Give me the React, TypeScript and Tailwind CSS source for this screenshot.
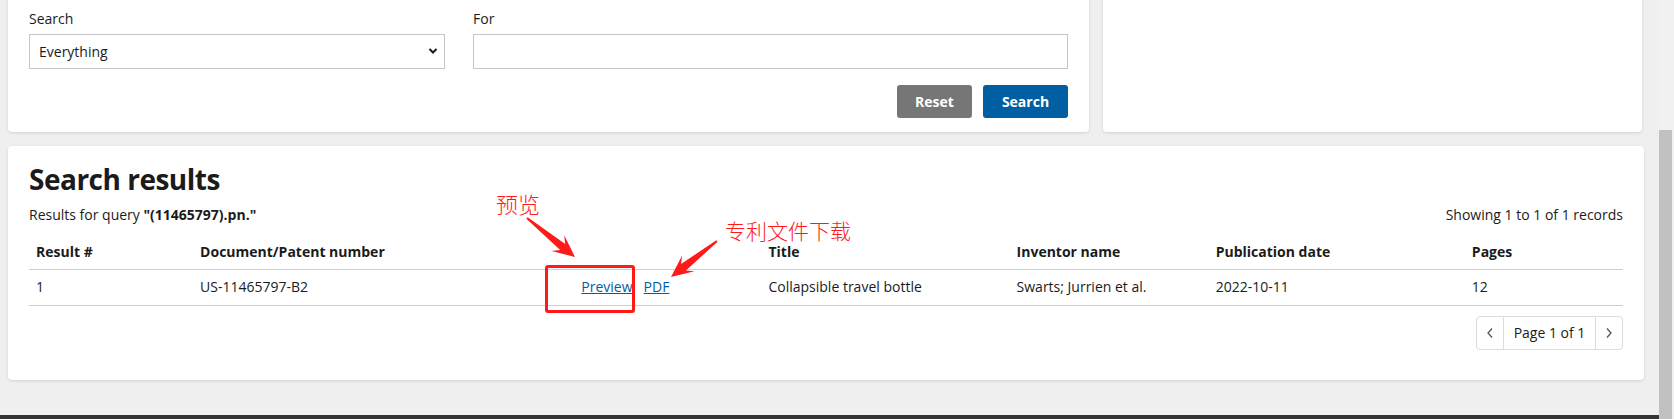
import React from "react";

const font = { fontFamily: "'Open Sans', 'Noto Sans CJK SC', sans-serif" };

function arrowPoints(tx: number, ty: number, px: number, py: number) {
  const dx = px - tx;
  const dy = py - ty;
  const len = Math.hypot(dx, dy);
  const ux = dx / len;
  const uy = dy / len;
  const nx = -uy;
  const ny = ux;
  const headL = 22;
  const headW = 10;
  const w0 = 1;
  const w1 = 4;
  const bx = px - ux * headL;
  const by = py - uy * headL;
  const sx = px - ux * headL * 0.72;
  const sy = py - uy * headL * 0.72;
  const pts = [
    [tx + nx * w0, ty + ny * w0],
    [sx + nx * w1, sy + ny * w1],
    [bx + nx * headW, by + ny * headW],
    [px, py],
    [bx - nx * headW, by - ny * headW],
    [sx - nx * w1, sy - ny * w1],
    [tx - nx * w0, ty - ny * w0],
  ];
  return pts.map((p) => p.join(",")).join(" ");
}

const columns = [
  { label: "Result #", w: "w-[164px]" },
  { label: "Document/Patent number", w: "w-[381px]" },
  { label: "", w: "w-[187px]" },
  { label: "Title", w: "w-[248px]" },
  { label: "Inventor name", w: "w-[199px]" },
  { label: "Publication date", w: "w-[256px]" },
  { label: "Pages", w: "w-[158px]" },
];

function SearchForm() {
  return (
    <div className="flex-1 bg-white rounded shadow-[0_1px_3px_rgba(0,0,0,0.12)] px-[21px] pt-[21px] pb-[14px]">
      <div className="flex gap-[28px]">
        <div className="w-[416px]">
          <label className="block text-sm leading-5 text-[#1b1b1b] mb-[5px]">Search</label>
          <div className="relative">
            <select className="appearance-none w-full h-[35px] border border-[#c6c6c6] bg-white pl-[9px] text-sm text-[#1b1b1b] outline-none">
              <option>Everything</option>
            </select>
            <svg className="absolute right-[7px] top-[13px]" width="10" height="8" viewBox="0 0 10 8">
              <path d="M1.5 2 L5 5.5 L8.5 2" fill="none" stroke="#1b1b1b" strokeWidth="2" />
            </svg>
          </div>
        </div>
        <div className="flex-1">
          <label className="block text-sm leading-5 text-[#1b1b1b] mb-[5px]">For</label>
          <input className="w-full h-[35px] border border-[#c6c6c6] bg-white px-2 text-sm outline-none" />
        </div>
      </div>
      <div className="flex justify-end gap-[11px] mt-[16px]">
        <button className="w-[75px] h-[33px] rounded-[3px] bg-[#767676] text-white text-sm font-bold">Reset</button>
        <button className="w-[85px] h-[33px] rounded-[3px] bg-[#005ea2] text-white text-sm font-bold">Search</button>
      </div>
    </div>
  );
}

function Results() {
  return (
    <div className="bg-white rounded shadow-[0_1px_3px_rgba(0,0,0,0.12)] px-[21px] pt-[16px] pb-[30px] mr-[15px]">
      <h1 className="text-[28px] leading-[34px] font-bold text-[#1b1b1b] tracking-[-0.5px]">Search results</h1>
      <div className="flex justify-between text-sm leading-5 text-[#1b1b1b] mt-[9px]">
        <p>
          Results for query <span className="font-bold">"(11465797).pn."</span>
        </p>
        <p>Showing 1 to 1 of 1 records</p>
      </div>
      <table className="table-fixed w-full mt-[10px] text-sm text-[#1b1b1b]">
        <colgroup>
          {columns.map((c, i) => (
            <col key={i} className={c.w} />
          ))}
        </colgroup>
        <thead>
          <tr className="border-b border-[#cfcfcf]">
            {columns.map((c, i) => (
              <th key={i} className="text-left font-bold px-[7px] h-[34px] leading-5">
                {c.label}
              </th>
            ))}
          </tr>
        </thead>
        <tbody>
          <tr className="border-b border-[#cfcfcf]">
            <td className="px-[7px] h-[36px]">1</td>
            <td className="px-[7px]">US-11465797-B2</td>
            <td className="px-[7px]">
              <a className="text-[#005ea2] underline">Preview</a>
              <a className="text-[#005ea2] underline ml-[11px]">PDF</a>
            </td>
            <td className="px-[7px]">Collapsible travel bottle</td>
            <td className="px-[7px]">Swarts; Jurrien et al.</td>
            <td className="px-[7px]">2022-10-11</td>
            <td className="px-[7px]">12</td>
          </tr>
        </tbody>
      </table>
      <div className="flex justify-end mt-[10px]">
        <div className="flex h-[34px] border border-[#dcdcdc] rounded text-sm text-[#1b1b1b]">
          <div className="w-[27px] flex items-center justify-center border-r border-[#dcdcdc]">
            <svg width="8" height="12" viewBox="0 0 8 12">
              <path d="M6 1.5 L2 6 L6 10.5" fill="none" stroke="#555" strokeWidth="1.3" />
            </svg>
          </div>
          <div className="w-[91px] flex items-center justify-center">Page 1 of 1</div>
          <div className="w-[27px] flex items-center justify-center border-l border-[#dcdcdc]">
            <svg width="8" height="12" viewBox="0 0 8 12">
              <path d="M2 1.5 L6 6 L2 10.5" fill="none" stroke="#555" strokeWidth="1.3" />
            </svg>
          </div>
        </div>
      </div>
    </div>
  );
}

export default function App() {
  return (
    <div className="relative w-[1674px] h-[419px] overflow-hidden flex bg-[#efefef]" style={font}>
      <div className="flex-1 flex flex-col">
        <div className="flex gap-[14px] -mt-3 pl-2 pr-[17px]">
          <SearchForm />
          <div className="w-[539px] bg-white rounded shadow-[0_1px_3px_rgba(0,0,0,0.12)]" />
        </div>
        <div className="pl-2 pt-[14px] flex-1">
          <Results />
        </div>
        <div className="h-[4px] bg-[#333333]" />
      </div>
      <div className="w-[15px] flex flex-col bg-[#f1f1f1]">
        <div className="h-[130px]" />
        <div className="flex-1 w-[13px] bg-[#c1c1c1]" />
      </div>

      {/* annotations */}
      <div className="absolute left-[496px] top-[192px] text-[22px] leading-6 text-[#ff1a1a] font-light">预览</div>
      <div className="absolute left-[725px] top-[219px] text-[21px] leading-6 text-[#ff1a1a] font-light">专利文件下载</div>
      <div className="absolute left-[545px] top-[265px] w-[90px] h-[48px] border-[3px] border-[#ff1a1a] rounded-[3px]" />
      <svg className="absolute left-0 top-0 pointer-events-none" width="1674" height="419">
        <polygon points={arrowPoints(527, 218, 575, 257)} fill="#ff1a1a" />
        <polygon points={arrowPoints(717, 241, 671, 277)} fill="#ff1a1a" />
      </svg>
    </div>
  );
}
